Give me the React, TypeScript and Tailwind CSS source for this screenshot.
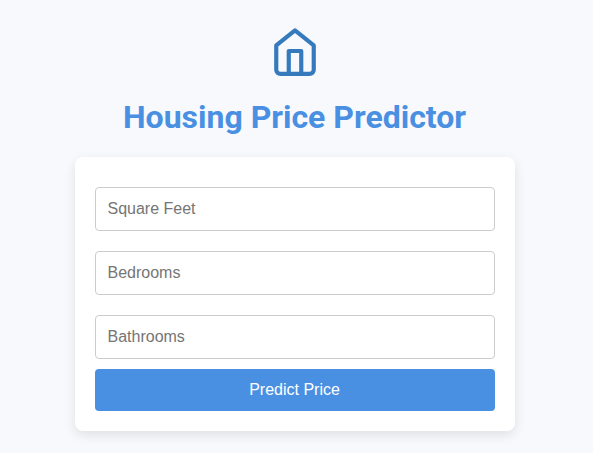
const fields = ['Square Feet', 'Bedrooms', 'Bathrooms'];

export default function App() {
  return (
    <main className="flex h-[453px] w-full flex-col items-center bg-[#f8f9fd] pr-[3px] pt-[26px] font-['Liberation_Sans',Arial,sans-serif]">
      <svg width="50" height="52" viewBox="0 0 24 24.96" fill="none" stroke="#357abd" strokeWidth="2" strokeLinecap="round" strokeLinejoin="round" aria-hidden="true">
        <path d="m3 9.300 9-7.200 9 7.200V21a2 2 0 0 1-2 2H5a2 2 0 0 1-2-2Z" />
        <path d="M9 23V12h6v11" />
      </svg>
      <h1 className="mt-[20px] -translate-x-[0.5px] font-['Roboto',sans-serif] text-[32px] font-bold leading-[38px] text-[#4a90e2]">Housing Price Predictor</h1>
      <form className="mt-[21px] flex h-[274px] w-[440px] flex-col rounded-lg bg-white px-5 pt-[30px] shadow-[0_4px_12px_rgba(0,0,0,0.1)]">
        {fields.map((field) => (
          <input key={field} placeholder={field} className="mb-5 h-11 w-full shrink-0 rounded border border-[#ccc] pl-[11.500px] pr-3 text-base placeholder:text-[#757575]" />
        ))}
        <button type="button" className="-mt-2.5 h-[42px] w-full shrink-0 rounded bg-[#4a90e2] pr-px text-base text-white">Predict Price</button>
      </form>
    </main>
  );
}
